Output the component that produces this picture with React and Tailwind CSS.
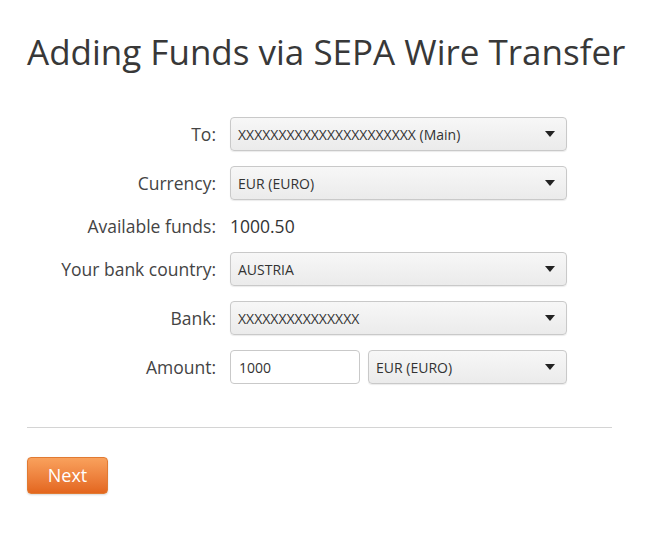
import React from 'react';

const font = { fontFamily: '"Open Sans", "Liberation Sans", sans-serif' };

const Caret = () => (
    <svg width="10" height="6" viewBox="0 0 10 6" className="shrink-0">
        <path d="M0 0 L10 0 L5 6 Z" fill="#222" />
    </svg>
);

const Select = ({ value, className = '' }) => (
    <div className={`h-[34px] flex items-center justify-between pl-[7px] pr-[11px] rounded-[4px] border border-[#c9c9c9] bg-gradient-to-b from-[#f7f7f7] to-[#ebebeb] shadow-[0_1px_1px_rgba(0,0,0,0.08)] text-[14px] text-[#333] ${className}`}>
        <span>{value}</span>
        <Caret />
    </div>
);

const Row = ({ label, children, className = 'h-[34px]' }) => (
    <div className={`flex items-center ${className}`}>
        <div className="w-[189px] text-right text-[17.5px] text-[#444] whitespace-nowrap">{label}</div>
        <div className="ml-[14px] w-[337px] flex items-center">{children}</div>
    </div>
);

export default function App() {
    return (
        <div className="bg-white w-[646px] h-[538px] pl-[27px] pt-[28px]" style={font}>
            <h1 className="text-[35px] leading-[48px] text-[#383838]">Adding Funds via SEPA Wire Transfer</h1>

            <div className="mt-[41px] flex flex-col gap-[15px]">
                <Row label="To:">
                    <Select value="XXXXXXXXXXXXXXXXXXXXXX (Main)" className="w-full" />
                </Row>
                <Row label="Currency:">
                    <Select value="EUR (EURO)" className="w-full" />
                </Row>
                <Row label="Available funds:" className="h-[22px]">
                    <span className="text-[17.5px] text-[#333]">1000.50</span>
                </Row>
                <Row label="Your bank country:">
                    <Select value="AUSTRIA" className="w-full" />
                </Row>
                <Row label="Bank:">
                    <Select value="XXXXXXXXXXXXXXX" className="w-full" />
                </Row>
                <Row label="Amount:">
                    <div className="w-[130px] h-[34px] flex items-center pl-[8px] rounded-[4px] border border-[#c9c9c9] bg-white text-[14px] text-[#333]">1000</div>
                    <Select value="EUR (EURO)" className="ml-[8px] flex-1" />
                </Row>
            </div>

            <div className="mt-[43px] w-[585px] border-t border-[#d4d4d4]" />

            <button className="mt-[29px] w-[81px] h-[37px] rounded-[4px] border border-[#e17a32] bg-gradient-to-b from-[#f9a15c] to-[#e3661d] text-white text-[18px] shadow-[0_1px_2px_rgba(0,0,0,0.15)]">
                Next
            </button>
        </div>
    );
}
